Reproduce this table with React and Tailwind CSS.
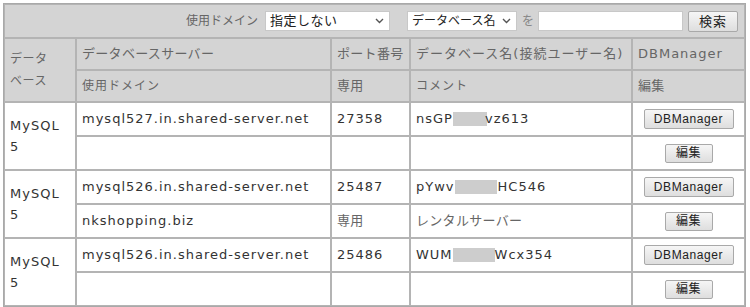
import React from 'react';

const jp = 'text-[13px] tracking-[0.3px] text-[#666]';
const cell = 'border border-[#b4b4b4] px-[5px] align-middle';

const Chevron = () => (
  <svg width="9" height="6" viewBox="0 0 9 6" className="shrink-0">
    <path d="M1 1 L4.5 4.5 L8 1" fill="none" stroke="#555" strokeWidth="1.4" />
  </svg>
);

const Masked = ({ head, tail, w }) => (
  <span className="inline-flex items-center">
    <span>{head}</span>
    <span className={`inline-block h-[14px] bg-[#cdcdcd] ${w}`} />
    <span>{tail}</span>
  </span>
);

const Button = ({ children, wide }) => (
  <button
    className={`${wide ? 'w-[90px] h-[20px]' : 'w-[48px] h-[19px]'} border border-[#a9a9a9] rounded-[2px] bg-gradient-to-b from-[#f6f6f6] to-[#dedede] text-[12px] text-[#222] leading-none tracking-[0.6px]`}
    style={{ fontFamily: '"Liberation Sans", "Noto Sans CJK JP", sans-serif' }}
  >
    {children}
  </button>
);

const rows = [
  {
    server: 'mysql527.in.shared-server.net',
    port: '27358',
    db: <Masked head="nsGP" tail="vz613" w="w-[34px] -mr-[2px]" />,
    domain: '',
    special: '',
    comment: '',
  },
  {
    server: 'mysql526.in.shared-server.net',
    port: '25487',
    db: <Masked head="pYwv" tail="HC546" w="w-[42px] mr-[1px]" />,
    domain: 'nkshopping.biz',
    special: '専用',
    comment: 'レンタルサーバー',
  },
  {
    server: 'mysql526.in.shared-server.net',
    port: '25486',
    db: <Masked head="WUM" tail="Wcx354" w="w-[42px]" />,
    domain: '',
    special: '',
    comment: '',
  },
];

export default function App() {
  return (
    <div
      className="bg-white w-[750px] h-[307px] pt-[3px] pl-[3px]"
      style={{ fontFamily: '"DejaVu Sans", "Noto Sans CJK JP", sans-serif' }}
    >
      <table className="border-separate border-spacing-0 border border-[#a9a9a9] w-[743px] text-[13px] tracking-[1px] text-[#333]">
        <colgroup>
          <col className="w-[72px]" />
          <col className="w-[255px]" />
          <col className="w-[79px]" />
          <col className="w-[222px]" />
          <col />
        </colgroup>
        <tbody>
          <tr className="bg-[#d4d4d4]">
            <td colSpan={5} className="border border-[#b4b4b4] h-[34px] pr-[6px]">
              <div className="flex items-center justify-end">
                <span className="text-[12px] tracking-normal text-[#666] mr-[7px]">使用ドメイン</span>
                <div className="w-[125px] h-[20px] bg-white border border-[#c8c8c8] flex items-center justify-between pl-[4px] pr-[5px] text-[13px] tracking-[0.5px] text-[#222]">
                  <span>指定しない</span>
                  <Chevron />
                </div>
                <div className="ml-[17px] w-[110px] h-[20px] bg-white border border-[#c8c8c8] flex items-center justify-between pl-[4px] pr-[5px] text-[12px] tracking-normal text-[#222]">
                  <span>データベース名</span>
                  <Chevron />
                </div>
                <span className="text-[12px] tracking-normal text-[#888] ml-[5px] mr-[4px]">を</span>
                <div className="w-[145px] h-[20px] bg-white border border-[#c8c8c8]" />
                <div className="ml-[5px]">
                  <button
                    className="w-[50px] h-[21px] border border-[#a9a9a9] rounded-[2px] bg-gradient-to-b from-[#f6f6f6] to-[#dedede] text-[13px] text-[#222] leading-none tracking-[1px]"
                  >
                    検索
                  </button>
                </div>
              </div>
            </td>
          </tr>
          <tr className="bg-[#d4d4d4]">
            <td rowSpan={2} className={`${cell} text-[12px] tracking-[0.5px] text-[#666] leading-[22px]`}>
              データ<br />ベース
            </td>
            <td className={`${cell} ${jp} h-[32px]`}>データベースサーバー</td>
            <td className={`${cell} ${jp}`}>ポート番号</td>
            <td className={`${cell} text-[13px] tracking-[1px] text-[#666]`}>データベース名(接続ユーザー名)</td>
            <td className={`${cell} text-[13px] text-[#666]`}>DBManager</td>
          </tr>
          <tr className="bg-[#d4d4d4]">
            <td className={`${cell} text-[12px] text-[#666] h-[32px]`}>使用ドメイン</td>
            <td className={`${cell} ${jp}`}>専用</td>
            <td className={`${cell} text-[12px] text-[#666]`}>コメント</td>
            <td className={`${cell} ${jp}`}>編集</td>
          </tr>
          {rows.map((r, i) => (
            <React.Fragment key={i}>
              <tr>
                <td rowSpan={2} className={`${cell} leading-[21px] text-[#333]`}>
                  MySQL<br />5
                </td>
                <td className={`${cell} h-[34px]`}>{r.server}</td>
                <td className={cell}>{r.port}</td>
                <td className={cell}>{r.db}</td>
                <td className={`${cell} text-center`}>
                  <Button wide>DBManager</Button>
                </td>
              </tr>
              <tr>
                <td className={`${cell} h-[34px]`}>{r.domain}</td>
                <td className={`${cell} ${jp} text-[#444]`}>{r.special}</td>
                <td className={`${cell} ${jp} text-[#555]`}>{r.comment}</td>
                <td className={`${cell} text-center`}>
                  <Button>編集</Button>
                </td>
              </tr>
            </React.Fragment>
          ))}
        </tbody>
      </table>
    </div>
  );
}
